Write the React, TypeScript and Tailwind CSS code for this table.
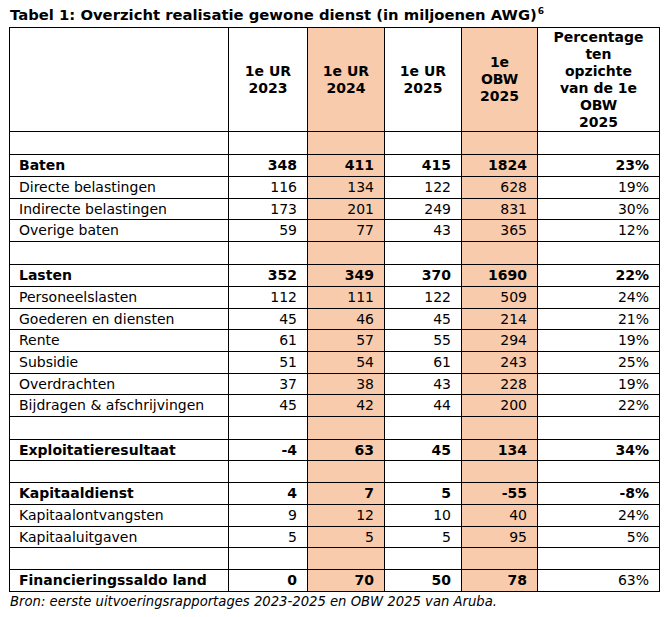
import React from "react";

type Row = { label?: string; vals?: string[]; bold?: boolean; lastPlain?: boolean; h: number };

const rows: Row[] = [
  { label: "Baten", vals: ["348", "411", "415", "1824", "23%"], bold: true, h: 22 },
  { label: "Directe belastingen", vals: ["116", "134", "122", "628", "19%"], h: 22 },
  { label: "Indirecte belastingen", vals: ["173", "201", "249", "831", "30%"], h: 21 },
  { label: "Overige baten", vals: ["59", "77", "43", "365", "12%"], h: 22 },
  { h: 23 },
  { label: "Lasten", vals: ["352", "349", "370", "1690", "22%"], bold: true, h: 22 },
  { label: "Personeelslasten", vals: ["112", "111", "122", "509", "24%"], h: 22 },
  { label: "Goederen en diensten", vals: ["45", "46", "45", "214", "21%"], h: 21 },
  { label: "Rente", vals: ["61", "57", "55", "294", "19%"], h: 22 },
  { label: "Subsidie", vals: ["51", "54", "61", "243", "25%"], h: 22 },
  { label: "Overdrachten", vals: ["37", "38", "43", "228", "19%"], h: 21 },
  { label: "Bijdragen & afschrijvingen", vals: ["45", "42", "44", "200", "22%"], h: 22 },
  { h: 23 },
  { label: "Exploitatieresultaat", vals: ["-4", "63", "45", "134", "34%"], bold: true, h: 21 },
  { h: 22 },
  { label: "Kapitaaldienst", vals: ["4", "7", "5", "-55", "-8%"], bold: true, h: 22 },
  { label: "Kapitaalontvangsten", vals: ["9", "12", "10", "40", "24%"], h: 22 },
  { label: "Kapitaaluitgaven", vals: ["5", "5", "5", "95", "5%"], h: 21 },
  { h: 22 },
  { label: "Financieringssaldo land", vals: ["0", "70", "50", "78", "63%"], bold: true, lastPlain: true, h: 22 },
];

const shade = [false, false, true, false, true, false];
const widths = [219, 79, 77, 77, 76, 122];

export default function App() {
  return (
    <div
      className="w-[671px] h-[617px] bg-white text-black"
      style={{ fontFamily: '"DejaVu Sans", Verdana, sans-serif' }}
    >
      <div className="h-[27px] pl-[10px] pt-[6px] text-[14.8px] leading-[17px] font-bold whitespace-nowrap">
        Tabel 1: Overzicht realisatie gewone dienst (in miljoenen AWG)
        <span className="text-[9px] relative top-[-6px] ml-[1px]">6</span>
      </div>
      <table className="ml-[9px] border-collapse table-fixed w-[650px] text-[14px] leading-[17px]">
        <colgroup>
          {widths.map((w, i) => (
            <col key={i} style={{ width: w }} />
          ))}
        </colgroup>
        <tbody>
          <tr className="h-[104px]">
            <td className="border border-black p-0" />
            <td className="border border-black p-0 text-center font-bold align-middle">1e UR<br />2023</td>
            <td className="border border-black p-0 text-center font-bold align-middle bg-[#f8cbad]">1e UR<br />2024</td>
            <td className="border border-black p-0 text-center font-bold align-middle">1e UR<br />2025</td>
            <td className="border border-black p-0 text-center font-bold align-middle bg-[#f8cbad]">1e<br />OBW<br />2025</td>
            <td className="border border-black p-0 text-center font-bold align-middle">
              Percentage<br />ten<br />opzichte<br />van de 1e<br />OBW<br />2025
            </td>
          </tr>
          <tr className="h-[23px]">
            {shade.map((s, i) => (
              <td key={i} className={`border border-black p-0 ${s ? "bg-[#f8cbad]" : ""}`} />
            ))}
          </tr>
          {rows.map((r, ri) => (
            <tr key={ri} style={{ height: r.h }}>
              <td className={`border border-black py-0 pl-[9px] pr-0 whitespace-nowrap ${r.bold ? "font-bold" : ""}`}>
                {r.label ?? ""}
              </td>
              {[0, 1, 2, 3, 4].map((ci) => (
                <td
                  key={ci}
                  className={`border border-black py-0 pl-0 pr-[10px] text-right whitespace-nowrap ${
                    shade[ci + 1] ? "bg-[#f8cbad]" : ""
                  } ${r.bold && !(r.lastPlain && ci === 4) ? "font-bold" : ""}`}
                >
                  {r.vals ? r.vals[ci] : ""}
                </td>
              ))}
            </tr>
          ))}
        </tbody>
      </table>
      <div className="pl-[10px] pt-[1px] text-[13.2px] leading-[17px] italic whitespace-nowrap">
        Bron: eerste uitvoeringsrapportages 2023-2025 en OBW 2025 van Aruba.
      </div>
    </div>
  );
}
